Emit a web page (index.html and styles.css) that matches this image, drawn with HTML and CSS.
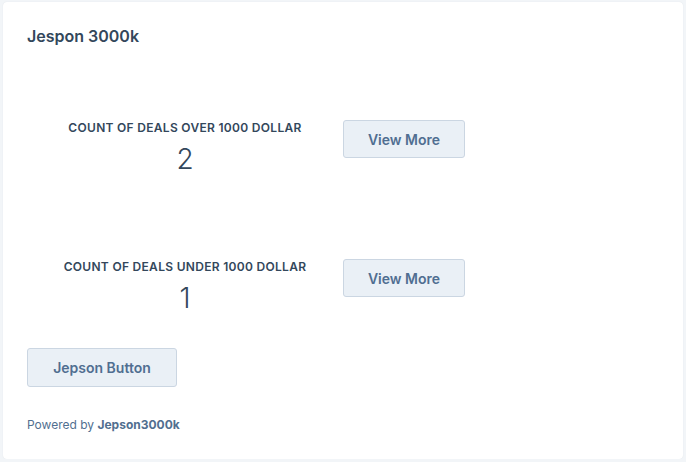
FILE: index.html
```html
<!DOCTYPE html>
<html>
<head>
<meta charset="utf-8">
<link rel="stylesheet" href="styles.css">
</head>
<body>
<div class="card">
  <h1 class="title">Jespon 3000k</h1>
  <div class="stat-row first">
    <div class="stat">
      <div class="stat-label">Count of deals over 1000 dollar</div>
      <div class="stat-value">2</div>
    </div>
    <button class="btn btn-more">View More</button>
  </div>
  <div class="stat-row second">
    <div class="stat">
      <div class="stat-label">Count of deals under 1000 dollar</div>
      <div class="stat-value">1</div>
    </div>
    <button class="btn btn-more">View More</button>
  </div>
  <button class="btn btn-main">Jepson Button</button>
  <p class="powered">Powered by <strong>Jepson3000k</strong></p>
</div>
</body>
</html>
```
FILE: styles.css
```css
html, body {
  margin: 0;
  padding: 0;
  background: #f2f5f8;
}
body {
  font-family: Inter, "Open Sans", sans-serif;
  color: #33475b;
}
.card {
  box-sizing: border-box;
  margin: 2px 3px 0 3px;
  height: 457px;
  background: #ffffff;
  border-radius: 4px;
  padding: 24px 24px 0 24px;
  box-shadow: 0 0 1px rgba(45, 62, 80, 0.12);
}
.title {
  margin: 0;
  font-size: 16px;
  font-weight: 600;
  line-height: 20px;
}
.stat-row {
  display: flex;
  align-items: flex-start;
}
.stat-row.first { margin-top: 74px; }
.stat-row.second { margin-top: 82px; }
.stat {
  width: 316px;
  text-align: center;
}
.stat-label {
  font-size: 12px;
  font-weight: 600;
  text-transform: uppercase;
  line-height: 16px;
  letter-spacing: 0.3px;
}
.stat-value {
  margin-top: 5px;
  font-size: 28px;
  font-weight: 300;
  line-height: 36px;
}
.btn {
  box-sizing: border-box;
  border: 1px solid #cbd6e2;
  background: #eaf0f6;
  border-radius: 3px;
  color: #506e91;
  font-family: Inter, "Open Sans", sans-serif;
  font-weight: 600;
  font-size: 14px;
  padding: 0;
  cursor: pointer;
}
.btn-more {
  width: 122px;
  height: 38px;
}
.btn-main {
  display: block;
  margin-top: 32px;
  width: 150px;
  height: 39px;
}
.powered {
  margin: 30px 0 0 0;
  font-size: 12px;
  color: #516f90;
}
.powered strong {
  font-weight: 700;
}
```
